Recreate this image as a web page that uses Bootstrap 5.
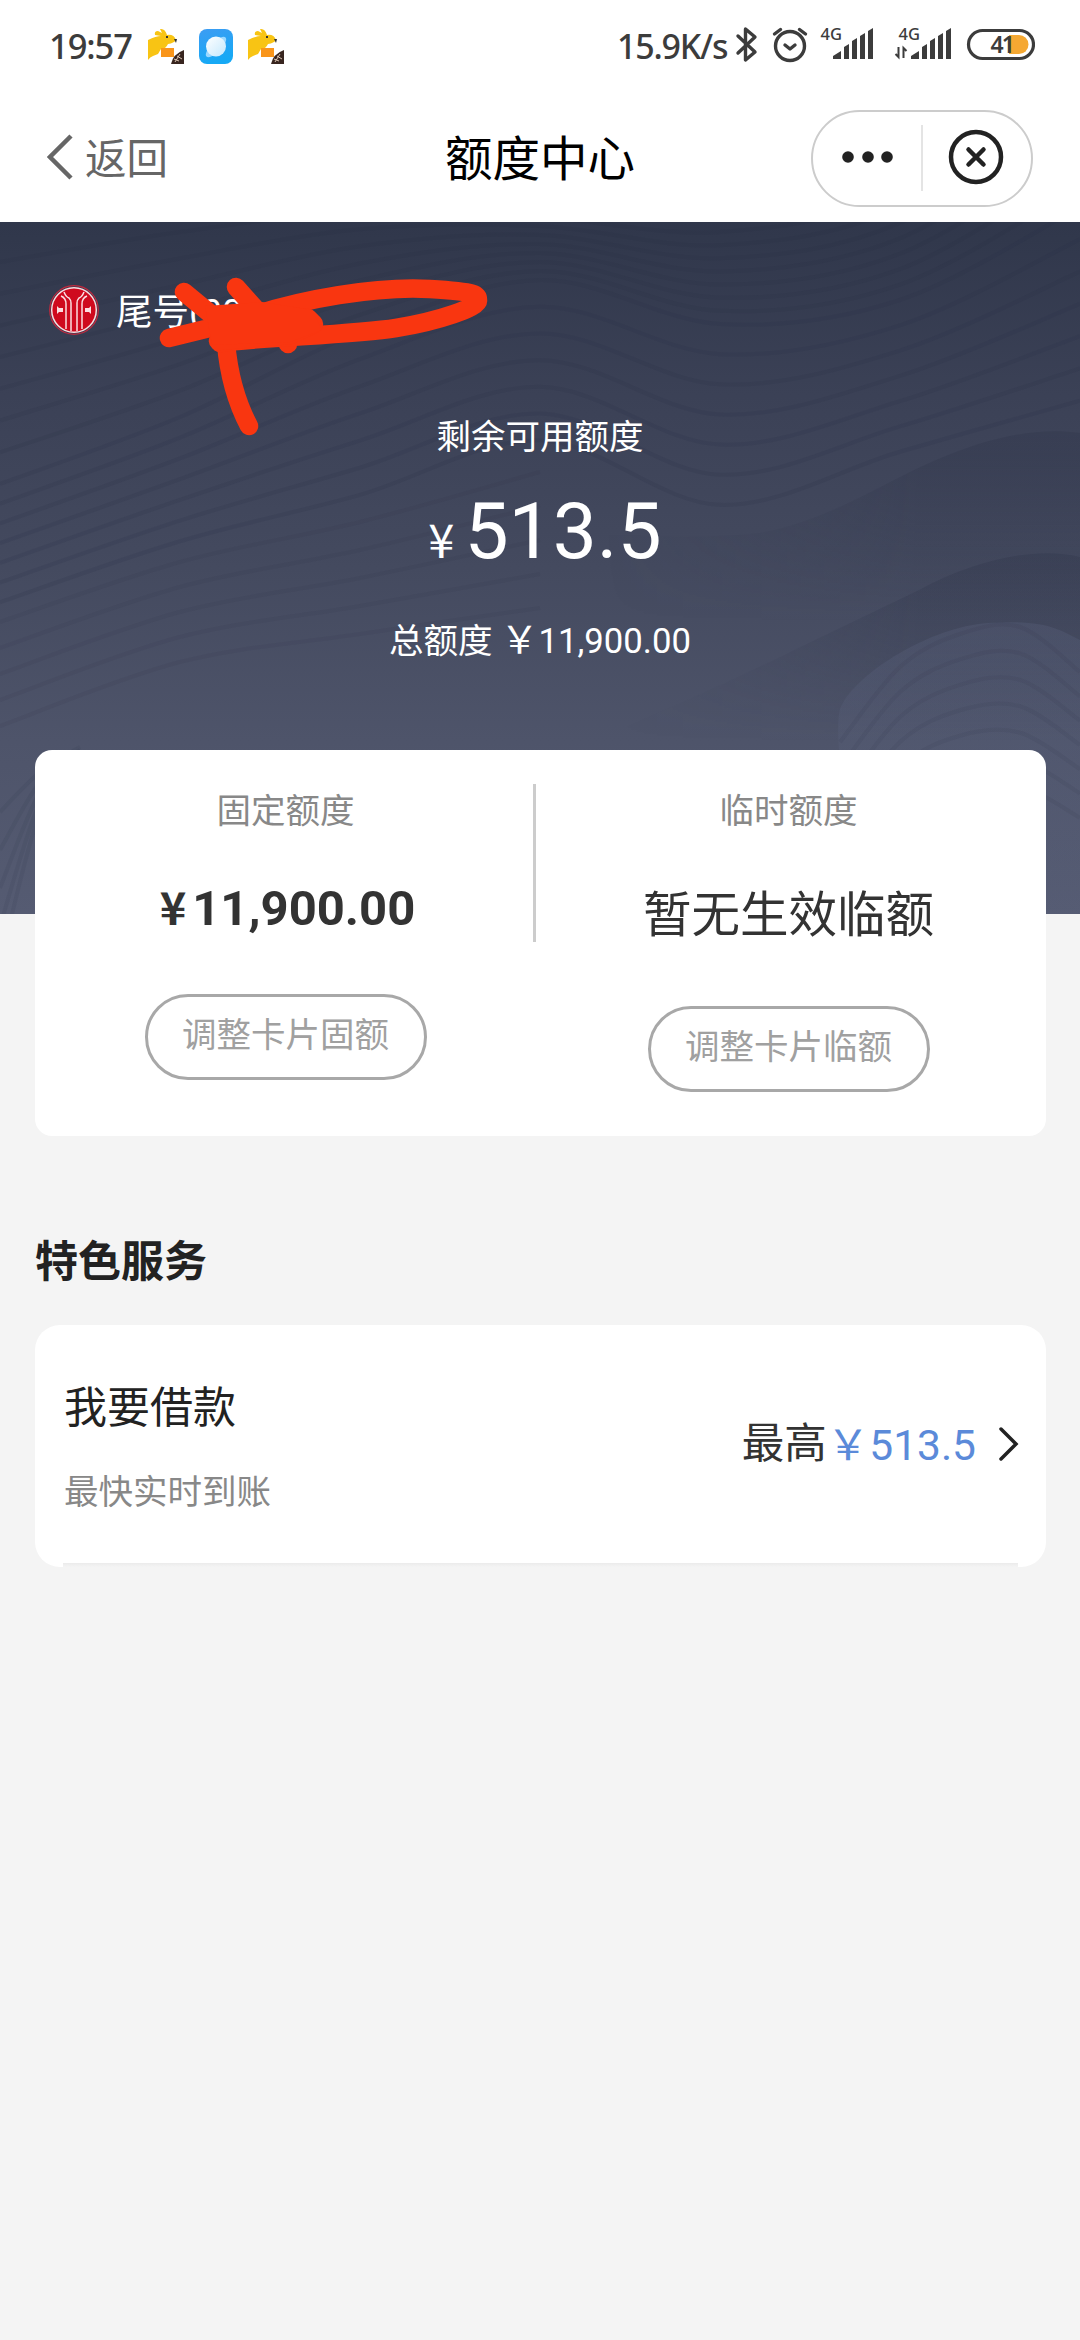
<!DOCTYPE html>
<html lang="zh-CN">
<head>
<meta charset="utf-8">
<meta name="viewport" content="width=device-width, initial-scale=1">
<title>额度中心</title>
<link rel="stylesheet" href="https://cdn.jsdelivr.net/npm/bootstrap@5.3.0/dist/css/bootstrap.min.css">
<style>
body{font-family:Roboto,"Noto Sans CJK SC",sans-serif;background:#f4f4f4;color:#222;min-height:2340px;line-height:1}
svg{display:block;flex:none}
.statusbar{height:92px;padding:0 45px 0 49px;color:#3c3c3c;font-family:"Noto Sans",sans-serif}
.clock{font-size:34.5px;font-weight:500;letter-spacing:-1.1px;width:99px}
.netspeed{font-size:34px;font-weight:500;letter-spacing:-1.2px;width:118px}
.titlebar{height:130px;padding:0 47px}
.side{width:222px}
.back{color:#666;font-size:41.5px;padding-top:5px}
.back svg{margin-top:-5px}
.page-name{font-size:47.5px;color:#000;padding-top:8px}
.capsule{width:222px;height:97px;border:2px solid #ccc;border-radius:49px;margin-right:0;margin-top:3px}
.hero{height:692px;background:linear-gradient(#30374b 0,#3b4156 25%,#444a5f 50%,#4e546a 75%,#555b72 100%)}
.hero-body{padding-top:63px}
.waves,.doodle{left:0;top:0}
.bank{height:50px;margin-left:49px;gap:17px;font-size:36.5px}
.bank div{padding-top:6px}
.lbl{font-size:34.5px}
.remain{height:34px;margin-top:85px}
.big{height:80px;margin-top:38px;font-size:78.5px;padding-left:10px}
.yen{font-family:"Noto Sans CJK SC",sans-serif}
.big .yen{font-size:47px;margin-right:10px;line-height:1}
.total{height:40px;margin-top:46px;font-size:34.7px}
.total .yen{font-size:38px}
.panel{margin:-164px 34px 0 35px;border-radius:17px;height:386px}
.half{width:501px}
.half.right{margin-right:7px}
.half .lbl{color:#888;margin-top:44px}
.vline{width:3px;height:158px;margin-top:34px;background:#ccc;margin-left:-3px}
.fixed{font-size:49px;color:#333;margin-top:54px;height:49px;padding-left:4px}
.fixed .yen{font-size:45px;margin-right:6px;line-height:1}
.temp{font-size:48.5px;color:#333;margin-top:63px;height:49px}
.pill{width:282px;height:86px;border:3px solid #a8a8a8;color:#a0a0a0;font-size:34.5px;padding:0 0 2px;border-radius:43px;line-height:1;margin-top:62px}
.right .pill{margin-top:65px}
.sect{font-size:43px;margin:101px 35px 0;height:44px}
.service{margin:44px 34px 0 35px;height:242px;border-radius:25px;padding:4px 27px 0 29px}
.service:after{content:"";position:absolute;left:28px;right:28px;bottom:0;height:4px;background:linear-gradient(#ebebeb,#f4f4f4)}
.service .hd{font-size:43px;margin-bottom:45px}
.service .sub{color:#888}
.money{font-size:42.5px;color:#333;padding-bottom:8px}
.blue{color:#5b8ad9}
</style>
</head>
<body>
<header class="bg-white">
  <div class="statusbar d-flex align-items-center">
    <div class="clock">19:57</div>
    <svg width="36" height="36" viewBox="0 0 36 36"><g id="roo"><path fill="#f8c414" d="M0 12Q8 8 13 8L7 7Q6 3 10 3L14 5 12 1Q17 0 19 7Q26 6 28 12Q26 15 20 16Q17 22 13 21L10 26L5 28Q2 29 0 32Z"/><path fill="#f9951a" d="M13 20h13v9H13z"/><path fill="#333" d="M26 11l3 0-1 4zM18 8h2v2h-2z"/><path fill="#38251f" d="M36 22V36H23Q25 26 36 22Z"/><path stroke="#d8c2b0" stroke-width="1" fill="none" d="M27 34l5-8M29 28l5 3M26 31l5 2"/></g></svg>
    <svg width="34" height="35" viewBox="0 0 34 35" style="margin-left:15px"><defs><linearGradient id="sky" x2=".3" y2="1"><stop stop-color="#3d9cf3"/><stop offset="1" stop-color="#16a9f5"/></linearGradient><linearGradient id="moon" x2="1" y2="1"><stop stop-color="#fff"/><stop offset="1" stop-color="#c4e8fd"/></linearGradient></defs><rect width="34" height="35" rx="8" fill="url(#sky)"/><ellipse cx="17" cy="18" rx="13.500" ry="5" transform="rotate(-45 17 18)" fill="#9bd8ff"/><circle cx="17" cy="17.500" r="10" fill="url(#moon)"/></svg>
    <svg width="36" height="36" viewBox="0 0 36 36" style="margin-left:15px"><use href="#roo"/></svg>
    <div class="ms-auto netspeed">15.9K/s</div>
    <svg width="300" height="60" viewBox="735 17 300 60">
      <g fill="none" stroke="#3c3c3c" stroke-width="3.400" stroke-linejoin="round" stroke-linecap="round">
        <path d="M738 37L755 53 745.500 61V30L755 38 738 54"/>
        <circle cx="790" cy="47" r="14.500"/><path d="M785 46l5 4 5-4M774.500 35l6-4.500M805.500 35l-6-4.500"/>
        <rect x="968.500" y="31.500" width="65" height="28" rx="14" stroke-width="3.200"/>
      </g>
      <path fill="#f5a832" d="M1009 36h10a9.500 9.500 0 0 1 0 19h-10z"/>
      <g id="bars" fill="#3c3c3c"><path d="M833 60v-3l8-5v8zM844 48l5-3v15h-5zM852 42l5-3v21h-5zM860 37l5-3v26h-5zM868 32l5-3v31h-5z"/></g>
      <use href="#bars" x="78"/>
      <path d="M898.500 48v10l-3-3M903.500 59V49l3 3" fill="none" stroke="#3c3c3c" stroke-width="2"/>
      <g fill="#3c3c3c" font-family="Noto Sans" font-weight="500"><text x="820.500" y="41" font-size="16.500">4G</text><text x="898.500" y="41" font-size="16.500">4G</text><text x="990.500" y="54" font-size="23" font-weight="600" letter-spacing="-2">41</text></g>
    </svg>
  </div>
  <nav class="titlebar d-flex align-items-center justify-content-between">
    <div class="side back d-flex align-items-center">
      <svg width="38" height="46" viewBox="0 0 38 46"><path d="M24 2L3 23 24 44" fill="none" stroke="#666" stroke-width="4.500"/></svg>返回
    </div>
    <div class="page-name">额度中心</div>
    <div class="capsule">
      <svg width="218" height="93" viewBox="812 113 218 93"><g fill="#222"><circle cx="847" cy="158" r="5.800"/><circle cx="867" cy="158" r="5.800"/><circle cx="886" cy="158" r="5.800"/></g><path d="M921 126v66" stroke="#e4e4e4" stroke-width="2"/><g fill="none" stroke="#222" stroke-width="4.500"><circle cx="975" cy="158" r="25"/><path stroke-linecap="round" d="M967.500 150.500l15 15M982.500 150.500l-15 15"/></g></svg>
    </div>
  </nav>
</header>

<section class="hero position-relative text-white">
  <svg class="waves position-absolute" width="1080" height="692" viewBox="0 0 1080 692">
    <defs>
      <linearGradient id="shade" x2="0" y2="1"><stop stop-color="#30364b" stop-opacity=".36"/><stop offset=".7" stop-color="#30364b" stop-opacity="0"/></linearGradient>
      <linearGradient id="glow" x2="0" y2="1"><stop stop-color="#5c6480" stop-opacity=".3"/><stop offset="1" stop-color="#5c6480" stop-opacity=".1"/></linearGradient>
      <linearGradient id="fade"><stop offset=".56" stop-color="#000"/><stop offset=".85" stop-color="#fff"/></linearGradient>
      <mask id="rightside"><rect width="1080" height="692" fill="url(#fade)"/></mask>
    </defs>
    <g mask="url(#rightside)">
      <path fill="url(#shade)" d="M600 312Q700 318 760 311C830 298 880 262 936 238S1040 205 1080 211V480H600Z"/>
      <path fill="url(#shade)" d="M600 515Q700 475 815 418L919 368C980 335 1040 325 1080 335V600H600Z"/>
    </g>
    <path fill="url(#glow)" d="M840 540Q835 490 843 481C860 450 930 405 988 401S1060 408 1080 418V692H840Z"/>
    <g id="contours" fill="none" stroke="#2a3045" stroke-width="4"></g>
  </svg>
  <div class="hero-body position-relative">
    <div class="bank d-flex align-items-center">
      <svg width="50" height="50" viewBox="0 0 50 50"><circle cx="25" cy="25" r="24.300" fill="none" stroke="#c3283d" stroke-width="1.200"/><circle cx="25" cy="25" r="22.300" fill="#cf0a1e" stroke="#fbdde0" stroke-width="1.500"/><g fill="none" stroke="#fbdde0" stroke-width="1.500"><path d="M15 7Q17 12 20 13Q22 15 22 18V46M35 7Q33 12 30 13Q28 15 28 18V46M12 11Q17 13 17 19V44M38 11Q33 13 33 19V44"/></g><path fill="#fbdde0" d="M8 21l2 2h4v4h-4l-2 2zM42 21l-2 2h-4v4h4l2 2z"/></svg>
      <div>尾号(00</div>
    </div>
    <div class="remain lbl text-center">剩余可用额度</div>
    <div class="big d-flex justify-content-center align-items-baseline"><span class="yen">¥</span>513.5</div>
    <div class="total d-flex justify-content-center align-items-baseline"><span class="lbl me-2">总额度</span><span class="yen">￥</span>11,900.00</div>
  </div>
  <svg class="doodle position-absolute" width="520" height="240" viewBox="0 222 520 240">
    <g fill="none" stroke="#f93610" stroke-width="18.500" stroke-linecap="round" stroke-linejoin="round">
      <path d="M184 292L224 325M236 287L270 325M169 338L230 323M226 343Q230 390 249 426M288 338V344"/>
      <path d="M240 320C300 298 380 286 430 289S478 295 478 301S440 321 396 328S260 337 220 343"/>
      <path fill="#f93610" d="M218 341L226 323 262 314 308 318 314 324 290 335Z"/>
      <path fill="#f93610" stroke="none" d="M205 306L262 302 312 310 322 330 290 342 212 345Z"/>
    </g>
  </svg>
</section>

<main>
  <section class="panel bg-white position-relative d-flex align-items-start">
    <div class="half d-flex flex-column align-items-center">
      <div class="lbl">固定额度</div>
      <div class="fixed fw-bold d-flex align-items-baseline"><span class="yen">¥</span>11,900.00</div>
      <button class="btn pill">调整卡片固额</button>
    </div>
    <div class="vline"></div>
    <div class="half right d-flex flex-column align-items-center ms-auto">
      <div class="lbl">临时额度</div>
      <div class="temp">暂无生效临额</div>
      <button class="btn pill">调整卡片临额</button>
    </div>
  </section>
  <h2 class="sect fw-bold">特色服务</h2>
  <section class="service bg-white position-relative d-flex justify-content-between align-items-center">
    <div>
      <div class="hd">我要借款</div>
      <div class="sub lbl">最快实时到账</div>
    </div>
    <div class="money d-flex align-items-center">最高<span class="blue"><span class="yen">￥</span>513.5</span>
      <svg width="20" height="34" viewBox="0 0 20 34" style="margin-left:23px"><path d="M2 2L17 17 2 32" fill="none" stroke="#222" stroke-width="3.500" stroke-linecap="round"/></svg>
    </div>
  </section>
</main>
<script src="https://cdn.jsdelivr.net/npm/bootstrap@5.3.0/dist/js/bootstrap.bundle.min.js"></script>
<script>
// Contour lines: each family blends from one height profile to another.
const g = document.getElementById('contours');
function family(x0, step, a, b, count, opacity) {
  for (let i = 0; i < count; i++) {
    const t = i / count;
    const p = a.map((v, k) => [x0 + k * step, v + (b[k] - v) * t]);
    let d = 'M' + p[0];
    for (let k = 0; k < p.length - 1; k++) {
      const q = p[k - 1] || p[k], r = p[k + 1], s = p[k + 2] || r;
      d += 'C' + [p[k][0] + (r[0] - q[0]) / 6, p[k][1] + (r[1] - q[1]) / 6,
                  r[0] - (s[0] - p[k][0]) / 6, r[1] - (s[1] - p[k][1]) / 6, r[0], r[1]];
    }
    const e = document.createElementNS('http://www.w3.org/2000/svg', 'path');
    e.setAttribute('d', d);
    e.setAttribute('stroke-opacity', opacity);
    g.appendChild(e);
  }
}
family(0, 180, [40,10,-10,-5,10,-30,-160], [262,195,110,58,102,78,-15], 7, .15);
family(0, 180, [262,195,110,58,102,78,-15], [400,340,300,245,313,255,211], 7, .17);
family(0, 180, [400,340,300,250], [530,465,440,420], 5, .09);
family(0, 40, [590,550,525], [780,600,540], 5, .1);
family(840, 60, [520,445,412,405,450], [700,620,590,590,620], 7, .09);
</script>
</body>
</html>
